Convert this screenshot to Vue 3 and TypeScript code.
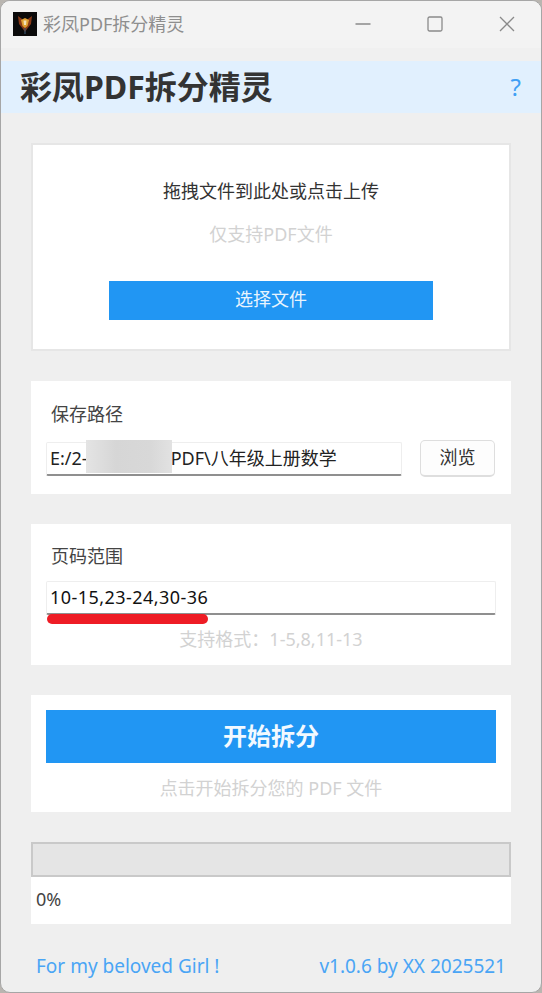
<script setup lang="ts">
const title = '彩凤PDF拆分精灵'
const progress = 0
</script>

<template>
  <div class="window">
    <div class="titlebar">
      <svg class="logo" viewBox="0 0 24 24" aria-hidden="true">
        <rect width="24" height="24" fill="#0b0a0a" />
        <path d="M5 4 L9 7 L12 13 L15 7 L19 4 L18 12 L14 17 L12 20 L10 17 L6 12 Z" fill="#8a3a17" />
        <path d="M8 8 L12 6 L16 8 L14.5 14 L12 16 L9.5 14 Z" fill="#e0a030" />
        <path d="M10.5 8.5 L13.5 8.5 L13 13 L11 13 Z" fill="#f3e2b8" />
        <path d="M12 16 L12 22" stroke="#35506a" stroke-width="1.2" />
      </svg>
      <span class="window-title">{{ title }}</span>
      <div class="controls">
        <svg class="ctl" viewBox="0 0 16 16" aria-hidden="true"><path d="M0.5 8 H15.5" /></svg>
        <svg class="ctl" viewBox="0 0 16 16" aria-hidden="true"><rect x="1" y="1" width="14" height="14" rx="1.5" /></svg>
        <svg class="ctl" viewBox="0 0 16 16" aria-hidden="true"><path d="M1 1 L15 15 M15 1 L1 15" /></svg>
      </div>
    </div>

    <header class="header">
      <h1>{{ title }}</h1>
      <span class="help">?</span>
    </header>

    <main class="content">
      <section class="card upload">
        <p class="upload-title">拖拽文件到此处或点击上传</p>
        <p class="hint upload-hint">仅支持PDF文件</p>
        <div class="select-btn">选择文件</div>
      </section>

      <section class="card path">
        <label class="label">保存路径</label>
        <div class="row">
          <div class="field path-field">
            <span>E:/2-</span><span class="gap"></span><span>PDF\八年级上册数学</span>
            <div class="mask"></div>
          </div>
          <div class="browse">浏览</div>
        </div>
      </section>

      <section class="card range">
        <label class="label">页码范围</label>
        <div class="field range-field">
          10-15,23-24,30-36
          <div class="mark"></div>
        </div>
        <p class="hint range-hint">支持格式：1-5,8,11-13</p>
      </section>

      <section class="card start">
        <div class="start-btn">开始拆分</div>
        <p class="hint start-hint">点击开始拆分您的 PDF 文件</p>
      </section>

      <section class="progress">
        <div class="track"><div class="fill" :style="{ width: progress + '%' }"></div></div>
        <div class="percent">{{ progress }}%</div>
      </section>
    </main>

    <footer class="footer">
      <span>For my beloved Girl !</span>
      <span>v1.0.6 by XX 2025521</span>
    </footer>
  </div>
</template>

<style>
html, body { margin: 0; background: #b9b5b0; }
</style>

<style scoped>
* { box-sizing: border-box; }
.window {
  width: 542px;
  height: 993px;
  background: #efefef;
  border: 1px solid #a6a6a6;
  border-radius: 10px;
  overflow: hidden;
  display: flex;
  flex-direction: column;
  font-family: "Noto Sans", "Noto Sans CJK SC", sans-serif;
  color: #333;
}
.titlebar {
  height: 60px;
  flex: none;
  background: linear-gradient(#f3f3f3 0 47px, #f0f0f0 47px);
  display: flex;
  align-items: flex-start;
  padding: 11px 0 0 12px;
}
.logo { width: 24px; height: 24px; flex: none; }
.window-title { margin-left: 6px; font-size: 18px; line-height: 24px; color: #8e8e8e; }
.controls { margin-left: auto; display: flex; gap: 56px; padding: 4px 26px 0 0; }
.ctl { width: 16px; height: 16px; fill: none; stroke: #8a8a8a; stroke-width: 1.3; }
.header {
  height: 52px;
  flex: none;
  background: #e1f0fe;
  display: flex;
  align-items: center;
  justify-content: space-between;
  padding: 0 20px 0 19px;
}
.header h1 { margin: 0; font-size: 32px; font-weight: 700; color: #333; line-height: 52px; }
.help { font-size: 24px; color: #3f9ff5; line-height: 52px; }
.content {
  flex: 1;
  padding: 30px 30px 0;
  display: flex;
  flex-direction: column;
  gap: 30px;
}
.card { background: #fff; }
.upload {
  height: 208px;
  border: 2px solid #e6e6e6;
  display: flex;
  flex-direction: column;
  align-items: center;
}
.upload-title { margin: 33px 0 0; font-size: 18px; line-height: 26px; color: #333; }
.upload-hint { margin-top: 17px; }
.hint { margin-bottom: 0; font-size: 18px; line-height: 26px; color: #d2d2d2; text-align: center; }
.select-btn {
  margin-top: 34px;
  width: 324px;
  height: 39px;
  background: #2196f3;
  color: #e8f4fe;
  font-size: 18px;
  line-height: 37px;
  text-align: center;
}
.path { height: 113px; padding: 21px 16px 0 15px; }
.label { display: block; padding-left: 5px; font-size: 18px; line-height: 24px; color: #444; }
.row { display: flex; justify-content: space-between; align-items: center; margin-top: 14px; }
.field {
  position: relative;
  height: 34px;
  background: #fff;
  border: 1px solid #eeeeee;
  border-bottom: 2px solid #8f8f8f;
  border-radius: 2px;
  padding-left: 3px;
  font-size: 18px;
  line-height: 31px;
  color: #222;
  white-space: nowrap;
}
.path-field { width: 356px; display: flex; }
.gap { width: 83px; }
.mask {
  position: absolute;
  left: 39px;
  top: -3px;
  width: 86px;
  height: 33px;
  background: linear-gradient(90deg, #e4e4e4, #d6d6d6 35%, #d8d8d8 75%, #e2e2e2);
}
.browse {
  width: 75px;
  height: 37px;
  background: #fdfdfd;
  border: 1px solid #dedede;
  border-bottom-width: 2px;
  border-radius: 5px;
  font-size: 18px;
  line-height: 33px;
  text-align: center;
  color: #333;
}
.range { height: 141px; padding: 20px 15px 0; }
.range-field { margin-top: 13px; height: 34px; line-height: 30px; letter-spacing: 0.45px; color: #111; }
.mark {
  position: absolute;
  left: 0;
  top: 32px;
  width: 161px;
  height: 10px;
  background: #ee1c25;
  border-radius: 5px;
}
.range-hint { margin: 11px 0 0; }
.start { height: 117px; padding: 15px 15px 0; }
.start-btn {
  height: 53px;
  background: #2196f3;
  color: #f2f9ff;
  font-size: 24px;
  font-weight: 700;
  line-height: 51px;
  text-align: center;
}
.start-hint { margin-top: 12px; }
.progress { background: #fff; height: 82px; }
.track { height: 35px; background: #e5e5e5; border: 2px solid #c9c9c9; }
.fill { height: 100%; background: #2196f3; }
.percent { padding: 10px 0 0 5px; font-size: 18px; line-height: 24px; color: #444; }
.footer {
  flex: none;
  height: 69px;
  padding: 30px 35px 0 35px;
  display: flex;
  justify-content: space-between;
  font-size: 19px;
  line-height: 24px;
  color: #4aa5f5;
}
</style>
